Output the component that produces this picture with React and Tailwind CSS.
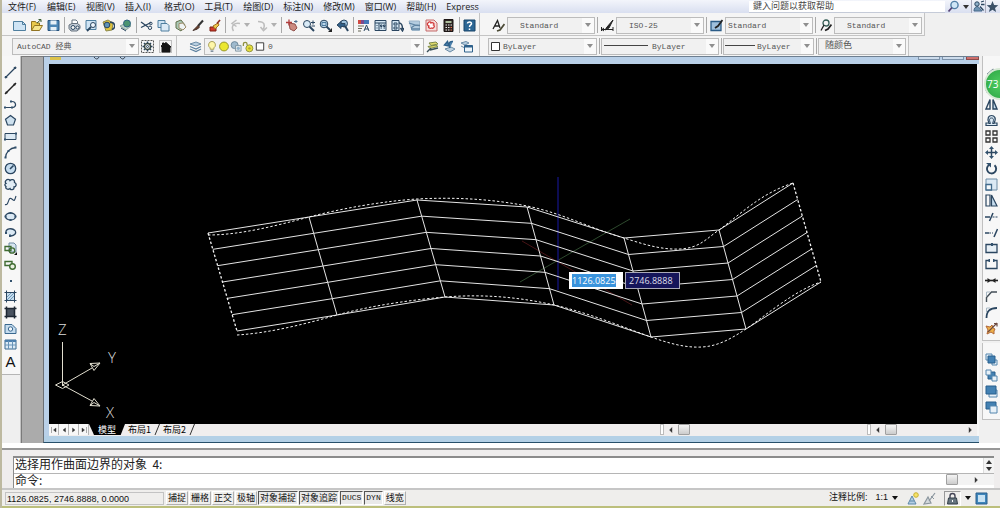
import React from "react";

/* ---------- icon helper ---------- */
const Ic = ({ children, c = "" }) => (
  <svg viewBox="0 0 13 13" className={"block h-[13px] w-[13px] shrink-0 " + c} fill="none" stroke="#2b4660" strokeWidth="1" aria-hidden="true">
    {children}
  </svg>
);
const Down = ({ c = "text-[#8f8f8f]" }) => (
  <svg viewBox="0 0 6 4" className={"block h-1 w-1.5 shrink-0 " + c} aria-hidden="true">
    <path d="M0 0h6L3 4z" fill="currentColor" />
  </svg>
);

const I = {
  fresh: <Ic><path d="M.5 2.5h9l3 3v6H.5z" fill="#cfe4f4" stroke="#4f7f9f" /><path d="M9.5 2.5v3h3" stroke="#4f7f9f" /></Ic>,
  open: <Ic><path d="M1.500 2.500h4l1 1.500h3V11h-8z" fill="#e9c94c" stroke="#927422" /><path d="M1.500 11.500l3-5h8l-3 5z" fill="#f6e58c" stroke="#927422" /><path d="M7 4l4-3.500M8.500.5H11V3" stroke="#3b5d33" /></Ic>,
  save: <Ic><path d="M1 1.500h11v10H1z" fill="#4c86b5" stroke="#285680" /><path d="M3.500 1.500h6v4h-6zM3.500 8h6v3.500h-6z" fill="#e6f0f7" stroke="none" /></Ic>,
  print: <Ic><path d="M4 5V1h4l1.500 1.500V5" fill="#fff" stroke="#66727e" /><path d="M1 6l3-1.500h5.500L12 6.500v3L9 12H3L1 9.500z" fill="#c3ccd6" stroke="#66727e" /><circle cx="5" cy="8.500" r="2" fill="#f5f5f5" /><circle cx="9.500" cy="8.500" r="1.500" fill="#f5f5f5" /></Ic>,
  preview: <Ic><path d="M1 1.500h10v9H1z" fill="#cfe4f4" stroke="#4f7f9f" /><circle cx="8" cy="6" r="2.500" fill="#eef7fd" /><path d="M6 8l-4 4" strokeWidth="1.800" /></Ic>,
  publish: <Ic><path d="M1 3l5-2 5 3-1 7-6 1z" fill="#dfc33c" stroke="#8d8a4c" /><circle cx="5" cy="6" r="2.800" fill="#5f93b8" /><path d="M8 3.500a3.500 3.500 0 0 1 2 7" strokeWidth="1.600" /></Ic>,
  globe: <Ic><path d="M1 7l6-3 5 3-5 4z" fill="#bcd1c8" stroke="#8ba69c" /><circle cx="8" cy="4.500" r="3.500" fill="#4a9470" stroke="#2d6280" /><path d="M2 9l5 3" /></Ic>,
  cut: <Ic><path d="M1 3l7 5M1 8.500l10-5" strokeWidth="1.300" /><circle cx="10" cy="8.800" r="1.700" /><circle cx="10.800" cy="4.500" r="1.300" /></Ic>,
  copy: <Ic><path d="M1 1.500h7v7H1z" fill="#cfe4f4" stroke="#4f7f9f" /><path d="M4 4.500h6l2 2V12H4z" fill="#dbeaf6" stroke="#4f7f9f" /></Ic>,
  paste: <Ic><path d="M2 3l5-2 4 5-4 6-5-3z" fill="#a9c7b4" stroke="#62704a" /><path d="M5 4.500l4-.5 3 4-3 3-4-2z" fill="#eef3f3" stroke="#9c8b68" /></Ic>,
  match: <Ic><path d="M12 1.500L7 7" stroke="#333" strokeWidth="2" /><path d="M7 6.500l-5 5 4.500-1.500 2-2z" fill="#6e4029" stroke="#43302a" /></Ic>,
  block: <Ic><path d="M2 8h6v4H2z" fill="#d23a2b" stroke="#7d2015" /><path d="M5 7l5-3 1 2-4 4z" fill="#f0c84b" stroke="#a07022" /><path d="M12 1L9 4.500" stroke="#8a2c20" strokeWidth="1.600" /></Ic>,
  undo: <Ic><path d="M4.500 12C1.500 7 5 3.500 11 4.500M7.500 1L3 4.500l4.500 3" stroke="#bdbdbd" strokeWidth="1.500" /></Ic>,
  redo: <Ic><path d="M2 2.500c7 0 7 4 5.500 7.500M4.500 8l3 3.500 3.500-3" stroke="#bdbdbd" strokeWidth="1.600" /></Ic>,
  pan: <Ic><path d="M4 4l6 1 2 4-3 3-4-2z" fill="#cb8a80" stroke="#93514c" /><path d="M1 3.500h6M4 .5v6" stroke="#b03c3c" strokeWidth="1.300" /><path d="M9 2.500h3.500M11 1v3" stroke="#4d6f8d" /></Ic>,
  zoomRt: <Ic><circle cx="5" cy="5" r="3.500" fill="#d9eaf6" /><path d="M7.500 7.500L12 12" strokeWidth="2" /><path d="M9 3.500h4M11 1.500v4M9.500 7H13" /></Ic>,
  zoomWin: <Ic><circle cx="5" cy="5" r="3.800" fill="#bcd6ea" /><path d="M3 3.500h4v3H3z" stroke="#4e7ca0" /><path d="M7.500 7.500L11 11" strokeWidth="2" /><path d="M13 13V9l-4 4z" fill="#222" stroke="none" /></Ic>,
  zoomPrev: <Ic><circle cx="8" cy="4.500" r="3.500" fill="#9fc3de" /><path d="M9 7l3 5" strokeWidth="2" /><path d="M1 6l4-3.500v2h4v3H5v2z" fill="#315f88" /></Ic>,
  props: <Ic><path d="M1 1h3v4H1z" fill="#d04a43" stroke="none" /><path d="M4 1h3v4H4z" fill="#7a4a90" stroke="none" /><path d="M7 1h5v4H7z" fill="#4477b8" stroke="none" /><path d="M1 7h6M1 9.500h4M1 12h3" stroke="#665" /><path d="M7 12l2.500-6L12 12M8 10h3.500" /></Ic>,
  center: <Ic><path d="M1 1.500h11v10H1z" fill="#d4e6f2" /><path d="M1 4h11M5 4v7.500M6.500 6h1.500v1.500H6.500zM9.500 6H11v1.500H9.500zM6.500 9H8M9.500 9H11M2.500 6.500h1M2.500 9h1" /></Ic>,
  palette: <Ic><path d="M1 1.500h7v10H1z" fill="#d4e6f2" /><path d="M3 4h3v2H3zM3 8h3v2H3z" /><path d="M8 4c3 0 3.500 2 3.500 6M9.500 9l2 3 1.500-3" strokeWidth="1.400" /></Ic>,
  sheet: <Ic><path d="M1 2h10.500v9.500H4z" fill="#b4cde0" stroke="#9bb4c8" /><path d="M1 4l6 2-4 3M6 6l6 .5M3 10h9" stroke="#5f84a2" strokeWidth="1.300" /></Ic>,
  markup: <Ic><path d="M1 1h8l3 3v8H1z" fill="#f6dcda" stroke="#c46a6a" /><path d="M3 4c1-2 3-1 3 0 2-1 4 1 2.500 2 2 1 0 4-2 3-2 1-4-1-2.500-2C2 6 2 4.500 3 4z" fill="#fff" stroke="#d23b3b" strokeWidth="1.300" /></Ic>,
  calc: <Ic><path d="M2 .5h9v12H2z" fill="#2d2422" stroke="#1d1615" /><path d="M3.500 2h6v2h-6z" fill="#aebf9e" stroke="none" /><path d="M3.500 6h1.500M6 6h1.500M8.500 6H10M3.500 8.500h1.500M6 8.500h1.500M3.500 11h1.500M6 11h1.500" stroke="#eee" /><path d="M8.500 8.500H10M8.500 11H10" stroke="#e86a4a" /></Ic>,
  help: <Ic><path d="M1 1h11v11H1z" fill="#2c6795" stroke="#184468" /><path d="M4.500 4.500C4.500 2.500 8.500 2.500 8.500 4.800 8.500 6 6.500 6 6.500 8M6.500 9.500v1.500" stroke="#fff" strokeWidth="1.500" /></Ic>,
  gear: <Ic><path d="M.5.500h12v12H.5z" stroke="#555" strokeDasharray="2 1" /><circle cx="6.500" cy="6.500" r="3" stroke="#3c4a44" strokeWidth="1.500" /><circle cx="6.500" cy="6.500" r="1" /><path d="M6.500 1.500V3M6.500 10v1.500M1.500 6.500H3M10 6.500h1.500M3 3l1 1M9 9l1 1M10 3L9 4M4 9l-1 1" strokeWidth="1.500" /></Ic>,
  home: <Ic><path d="M.5.500h12v12H.5z" stroke="#888" strokeDasharray="1 1" /><path d="M2 6l1.500-1V3H5v1l2-1.500L12 7h-1v5H3V7z" fill="#151515" stroke="#151515" /></Ic>,
  layers: <Ic><path d="M1 4l6-2 5 2-5 2z" fill="#b9d0e2" stroke="#6c8ca6" /><path d="M1 6.500l6 2.500 5-2.500M1 9l6 2.500L12 9" stroke="#5d82a0" strokeWidth="1.300" /></Ic>,
  bulb: <Ic><path d="M6.500 1a3.800 3.800 0 0 1 2 7v1.500h-4V8a3.800 3.800 0 0 1 2-7z" fill="#fff7a8" stroke="#a59c52" /><path d="M5 11.500h3" /></Ic>,
  sun: <Ic><circle cx="6.500" cy="6.500" r="4.800" fill="#ebe72f" stroke="#8f8f28" /></Ic>,
  freeze: <Ic><circle cx="5" cy="5" r="3.800" fill="#9fbace" stroke="#6b8799" /><path d="M6 5.500h6v6H6z" fill="#dde7ec" stroke="#8196a3" /><circle cx="9" cy="8.500" r="1.700" fill="#8eb0c9" stroke="none" /></Ic>,
  lock: <Ic><path d="M1.500 6V4a2 2 0 0 1 4 0v1" stroke="#8f9140" strokeWidth="1.400" /><circle cx="8" cy="8.500" r="3.800" fill="#e6df3b" stroke="#8f9140" /><circle cx="8" cy="8.500" r="1.300" fill="#b0a92a" stroke="none" /></Ic>,
  swatch: <Ic><path d="M2.500 2.500h8v8h-8z" fill="#fff" stroke="#333" /></Ic>,
  layA: <Ic><path d="M3 3l7-1 2 2-7 1.500zM2 6.500L10 5l2 1.500-8 2z" fill="#ded86c" stroke="#7d8a49" /><path d="M4 10l8-2M1 12l4-4" stroke="#394f58" strokeWidth="1.400" /></Ic>,
  layB: <Ic><path d="M2 9l6-2 4 2-5 3z" fill="#bcd0df" stroke="#6c8ca6" /><path d="M10 1.500C6 1 5 4 7 8M1.500 5l3-3.500L6 6z" fill="#4d82ad" stroke="#2f618b" strokeWidth="1.400" /></Ic>,
  layC: <Ic><path d="M1 3l5-1.500L9 3 5 5zM1 6l3 1.500" fill="#b9d0e2" stroke="#6c8ca6" /><path d="M4.500 5.500h8V12h-8z" fill="#eef5fa" stroke="#2f618b" /><path d="M4.500 6.500h8" stroke="#2f618b" strokeWidth="2" /></Ic>,
  textA: <Ic><path d="M1 10L5.500 1.500 8 9M3 7h4" stroke="#222" strokeWidth="1.300" /><path d="M12.500 5L8 11l-3 1" stroke="#4b4a35" strokeWidth="1.800" /></Ic>,
  dim: <Ic><path d="M.5 10.500H12M.5 8v4M12 8v4M3 9l-2 1.500L3 12" stroke="#222" /><path d="M12 1L6 8l-2 3 4-2z" fill="#222" stroke="#222" /></Ic>,
  tbl: <Ic><path d="M1 2.500h10v9H1z" fill="#9fc0dc" stroke="#2b5c87" strokeWidth="1.300" /><path d="M12.500 1L8 7l-3 2" stroke="#222" strokeWidth="1.800" /></Ic>,
  leader: <Ic><circle cx="7" cy="4" r="3" stroke="#315a52" strokeWidth="1.300" /><path d="M5 6L2 11.500" stroke="#222" strokeWidth="1.300" /><path d="M12.500 5.500L9 10l-3 1.500" stroke="#222" strokeWidth="1.800" /></Ic>,
  search: <Ic><circle cx="7.500" cy="5" r="3.600" fill="#d0e6f6" stroke="#527fa5" strokeWidth="1.400" /><path d="M5 7.500L1.500 11.500" strokeWidth="1.800" stroke="#547" /></Ic>,
  comm: <Ic><path d="M2 11c0-3 1.500-4.500 4-4.500L10 11z" fill="#6e93b2" stroke="#47698a" /><circle cx="5" cy="4" r="2.200" fill="#8fb0c9" /><path d="M9 2l3-1M9 4.500h3.500M8 6.500l3.500 4" strokeWidth="1.300" /></Ic>,
  star: <Ic><path d="M6.500 1l1.600 3.900 4.200.3L9 7.900l1.100 4.100-3.600-2.300L2.900 12 4 7.900.7 5.200l4.200-.3z" fill="#3a5068" stroke="none" /></Ic>,
};

const P = "#33526e";
const drawTools = [
  ["直线", <Ic><path d="M2 11L11 2" strokeWidth="1.300" /><path d="M1 12l.5-2L3 11.500zM12 1l-.5 2L10 1.500z" fill={P} /></Ic>],
  ["构造线", <Ic><path d="M1 12L12 1" strokeWidth="1.500" stroke="#222" /><path d="M1 12l1-3 2 2zM12 1L9 2l2 2z" fill="#222" stroke="none" /></Ic>],
  ["多段线", <Ic><path d="M1 9.500h8c4-1 3-6-1-6" strokeWidth="1.200" /><path d="M0 8.500h2v2H0zM7 8.500h2v2H7zM6 2.500h2v2H6z" fill={P} stroke="none" /></Ic>],
  ["正多边形", <Ic><path d="M6.500 1.500l5 3.800-2 5.700h-6l-2-5.700z" fill="#cde0ee" strokeWidth="1.200" /></Ic>],
  ["矩形", <Ic><path d="M1 3.500h11v6H1z" fill="#dce9f3" /><path d="M0 8.500h2v2H0zM11 2.500h2v2h-2z" fill={P} stroke="none" /></Ic>],
  ["圆弧", <Ic><path d="M1.500 11.500C2 6 6 2 11.500 1.500" strokeWidth="1.300" /><path d="M0.500 10.500h2v2h-2zM10.500.5h2v2h-2zM3.500 4h2v2h-2z" fill={P} stroke="none" /></Ic>],
  ["圆", <Ic><circle cx="6.500" cy="6.500" r="5.200" fill="#c5dcee" strokeWidth="1.300" /><path d="M6 7l3.500-3.500" strokeWidth="1.600" /></Ic>],
  ["修订云线", <Ic><path d="M2 2.500C3 1 5.500 1 6 2.500 7.500.8 11 1.500 10.500 4.500c2.500 1 2 4.500-.5 4.500.5 3-3.500 3.500-4 1.500-2 1.500-5 .5-4-2C.5 7.500.5 6 2 5.500 1 4.500 1 3.500 2 2.500z" fill="#e1ecf4" strokeWidth="1.300" /></Ic>],
  ["样条曲线", <Ic><path d="M1 10.500C5 12 4 3 7 4.500S10 9 12 2" strokeWidth="1.100" /></Ic>],
  ["椭圆", <Ic><ellipse cx="6.500" cy="6.500" rx="5" ry="3.500" fill="#dbe9f4" strokeWidth="1.300" /><path d="M.5 5.500h2v2h-2zM10.500 5.500h2v2h-2zM5.500 2h2v2h-2zM5.500 9h2v2h-2z" fill={P} stroke="none" /></Ic>],
  ["椭圆弧", <Ic><path d="M2 7C1 2.500 8 1.500 11 4.500c2 3-1 5-4 5.500" fill="#dbe9f4" strokeWidth="1.300" /><path d="M5 8.500h2v2.500H5zM1 6h2v2H1z" fill={P} stroke="none" /></Ic>],
  ["插入块", <Ic><path d="M5 1h5l2 2v7H5z" fill="#d7e5ef" stroke="#6e8ba3" /><path d="M1 4.500h6v4H1z" stroke="#3f6b31" strokeWidth="1.300" /><circle cx="8" cy="8.500" r="2.700" stroke="#3f6b31" strokeWidth="1.300" /><path d="M13 13v-3l-3 3z" fill="#111" stroke="none" /></Ic>],
  ["创建块", <Ic><path d="M1 3.500h7v4H1z" stroke="#3f6b31" strokeWidth="1.400" /><circle cx="8.500" cy="8.500" r="2.800" fill="#e9f0e0" stroke="#3f6b31" strokeWidth="1.400" /></Ic>],
  ["点", <Ic><path d="M6 6h2v2H6z" fill={P} stroke="none" /></Ic>],
  ["图案填充", <Ic><path d="M2.500 2.500h8v8h-8z" fill="#c5dcec" /><path d="M3 7l4-4M3 10l7-7M6 10l4-4" stroke="#6f9abd" /><path d="M.5 2.500h12M.5 10.500h12M2.500.5v12M10.500.5v12" /></Ic>],
  ["渐变色", <Ic><path d="M2.500 2.500h8v8h-8z" fill="#48525f" /><path d="M.5 2.500h12M.5 10.500h12M2.500.5v12M10.500.5v12" stroke="#1d2733" strokeWidth="1.500" /></Ic>],
  ["面域", <Ic><path d="M1 2.500h7l4 4v5H1z" fill="#c5dcee" stroke="#39688f" /><circle cx="6.500" cy="7" r="2.200" fill="#f2f7fb" stroke="#39688f" /></Ic>],
  ["表格", <Ic><path d="M1 2h11v9H1z" fill="#dcebf6" stroke="#39688f" /><path d="M1 3h11" stroke="#4a7fae" strokeWidth="2" /><path d="M4.500 3v8M8.500 3v8M1 7h11" stroke="#6994b8" /></Ic>],
];

const modifyTools = [
  ["删除", <Ic><path d="M2 8l6-5 3 2-6 5z" fill="#e8eef2" stroke="#7a8b98" /></Ic>],
  ["复制", <Ic><circle cx="4" cy="8" r="3" /><circle cx="9" cy="7" r="3" /></Ic>],
  ["镜像", <Ic><path d="M5 1.500V11H1z" strokeWidth="1.400" /><path d="M8 1.500V11h4z" fill="#c5dcee" strokeWidth="1.400" /></Ic>],
  ["偏移", <Ic><path d="M1 11.500h11V9H9C12 4 9 1.500 6.500 1.500S1.500 4 4 9H1z" fill="#dbe9f4" strokeWidth="1.200" /><path d="M3.500 9.500h2C3.500 5 5 4 6.500 4S9.500 5 7.500 9.500h2" /></Ic>],
  ["阵列", <Ic><path d="M1 1h4v4H1zM8 1h4v4H8zM1 8h4v4H1zM8 8h4v4H8z" strokeWidth="1.300" stroke="#333" /></Ic>],
  ["移动", <Ic><path d="M6.500 2v9M2 6.500h9" strokeWidth="1.500" /><path d="M6.500 0l2.500 3H4zM6.500 13L4 10h5zM0 6.500L3 4v5zM13 6.500L10 9V4z" fill={P} stroke="none" /></Ic>],
  ["旋转", <Ic><path d="M4 3a4.600 4.600 0 1 0 5.500.3" strokeWidth="1.900" /><path d="M1 1h5v4.500z" fill={P} stroke="none" /></Ic>],
  ["缩放", <Ic><path d="M1 1h11v11H1z" fill="#dbe9f4" stroke="#6f8da6" /><path d="M1 6.500h5.500V12H1z" fill="#f4f8fb" stroke="#426b8c" strokeWidth="1.300" /></Ic>],
  ["拉伸", <Ic><path d="M1 1h4v11H1z" strokeWidth="1.200" /><path d="M6.500 1L12 12H6.500z" fill="#c5dcee" strokeWidth="1.200" /></Ic>],
  ["修剪", <Ic><path d="M0 7h5M8 3L4.500 11" strokeWidth="1.500" /><path d="M7.500 7H13" strokeDasharray="2 1" /></Ic>],
  ["延伸", <Ic><path d="M0 7h4.500" strokeWidth="1.500" /><path d="M5 7h4" strokeDasharray="1 1" /><path d="M12.500 3L9 11" strokeWidth="1.500" /></Ic>],
  ["打断于点", <Ic><path d="M1 2.500h11v8H1z" fill="#e7eff5" strokeWidth="1.300" /><path d="M6 1h2v3H6z" fill={P} stroke="none" /></Ic>],
  ["打断", <Ic><path d="M4 2.500H1v8h11v-8H9" strokeWidth="1.300" /><path d="M3.500 1h1.500v3H3.500zM8 1h1.500v3H8z" fill={P} stroke="none" /></Ic>],
  ["合并", <Ic><path d="M0 6.500h13" stroke="#222" strokeWidth="1.600" /><path d="M6 6.500L2.500 4v5zM7 6.500L10.500 4v5z" fill="#222" stroke="none" /></Ic>],
  ["倒角", <Ic><path d="M1.500 12V7.500L6.500 2H12" strokeWidth="1.400" stroke="#444f58" /><path d="M1.500 6V2H5" stroke="#a8b8c4" /></Ic>],
  ["圆角", <Ic><path d="M1.500 12C1.500 5 5 2 12 2" strokeWidth="1.800" /><path d="M1.500 6V2H5" stroke="#a8b8c4" /></Ic>],
  ["分解", <Ic><path d="M1 4l4 1 2-2 1 3 2 1-1 2 0 3-3-2-4 2 1-4z" fill="#eeb14a" stroke="#b0683a" /><path d="M12 1L3 10M9 1.500h3v3" stroke="#6c4a41" strokeWidth="1.200" /></Ic>],
];
const orderTools = [
  ["前置", <Ic><path d="M1 1h6v6H1zM7 7h5v5H7z" fill="#e8f1f8" stroke="#5486ae" /><path d="M3 3h7v7H3z" fill="#4381b3" stroke="#295f8c" /></Ic>],
  ["后置", <Ic><path d="M3 3h7v7H3z" fill="#4381b3" stroke="#295f8c" /><path d="M1 1h5v5H1zM7 7h5v5H7z" fill="#e8f1f8" stroke="#5486ae" /></Ic>],
  ["置于对象之上", <Ic><path d="M4 5h8v7H4z" fill="#e8f1f8" stroke="#5486ae" /><path d="M1 1h10v8H1z" fill="#4381b3" stroke="#295f8c" /></Ic>],
  ["置于对象之下", <Ic><path d="M1 1h10v7H1z" fill="#4381b3" stroke="#295f8c" /><path d="M5 5h7v7H5z" fill="#e8f1f8" stroke="#5486ae" /></Ic>],
];

/* ---------- controls ---------- */
const Tool = ({ label, children }) => (
  <button type="button" aria-label={label} className="flex h-4 w-[17px] shrink-0 items-center justify-center">
    {children}
  </button>
);
const Sep = () => (
  <span className="flex h-4 w-1 shrink-0 justify-center">
    <span className="w-px bg-[#a9a9a9]" />
  </span>
);
const Combo = ({ label, value, w, pad = "pl-3", before, arrow = "w-3" }) => (
  <div className={"flex h-[17px] shrink-0 items-center border border-[#bcbcbc] bg-[#f1f1f1] " + w}>
    {before}
    <select aria-label={label} className={"h-[15px] min-w-0 flex-1 appearance-none bg-transparent font-['Liberation_Mono','Noto_Sans_CJK_SC',monospace] text-[8px] leading-[15px] text-[#555] outline-none " + pad}>
      <option>{value}</option>
    </select>
    <span className={"flex h-full shrink-0 items-center justify-center bg-[#fafafa] " + arrow}>
      <Down />
    </span>
  </div>
);
const Rule = () => (
  <svg viewBox="0 0 44 2" className="ml-0.5 block h-0.5 w-11 shrink-0" aria-hidden="true">
    <path d="M0 .5h44" stroke="#444" />
  </svg>
);

const menus = ["文件(F)", "编辑(E)", "视图(V)", "插入(I)", "格式(O)", "工具(T)", "绘图(D)", "标注(N)", "修改(M)", "窗口(W)", "帮助(H)", "Express"];

function MenuBar() {
  return (
    <header className="flex h-[13px] items-center bg-linear-to-b from-[#f3f5fb] to-[#d9dff0]">
      <nav className="flex gap-2.5 pl-1.5 font-['Open_Sans','Noto_Sans_CJK_SC',sans-serif] text-[9px] leading-[13px] text-[#1a1a1a]">
        {menus.map((m) => (
          <button type="button" key={m} className="min-w-[29px] whitespace-nowrap text-left">{m}</button>
        ))}
      </nav>
      <div className="ml-auto flex h-[13px] items-center">
        <input aria-label="帮助搜索" placeholder="鍵入问题以获取帮助" className="h-3 w-[196px] border-b border-[#c5cbd8] bg-white px-1 font-['Noto_Sans_CJK_SC',sans-serif] text-[9px] leading-3 placeholder:text-[#444] placeholder:opacity-100" />
        <button type="button" aria-label="搜索" className="flex items-center gap-[3px] px-0.5">{I.search}<Down c="text-[#333]" /></button>
        <button type="button" aria-label="通讯中心" className="border-l border-[#aab]">{I.comm}</button>
        <button type="button" aria-label="收藏夹" className="border-l border-[#aab] pr-px">{I.star}</button>
      </div>
    </header>
  );
}

function StandardBar() {
  return (
    <div className="flex">
      <div className="flex h-[23px] items-center border-r border-b border-[#c4c4c4] bg-[#f5f5f5] pt-0.5 pr-px pl-[9px]">
        <Tool label="新建">{I.fresh}</Tool><Tool label="打开">{I.open}</Tool><Tool label="保存">{I.save}</Tool><Sep />
        <Tool label="打印">{I.print}</Tool><Tool label="打印预览">{I.preview}</Tool><Tool label="发布">{I.publish}</Tool><Tool label="三维DWF">{I.globe}</Tool><Sep />
        <Tool label="剪切">{I.cut}</Tool><Tool label="复制到剪贴板">{I.copy}</Tool><Tool label="粘贴">{I.paste}</Tool><Tool label="特性匹配">{I.match}</Tool><Tool label="块编辑器">{I.block}</Tool><Sep />
        <Tool label="放弃">{I.undo}</Tool>
        <button type="button" aria-label="放弃列表" className="flex w-2.5 items-center"><Down c="text-[#b0b0b0]" /></button>
        <Tool label="重做">{I.redo}</Tool>
        <button type="button" aria-label="重做列表" className="flex w-2 items-center"><Down c="text-[#b0b0b0]" /></button><Sep />
        <Tool label="平移">{I.pan}</Tool><Tool label="实时缩放">{I.zoomRt}</Tool><Tool label="窗口缩放">{I.zoomWin}</Tool><Tool label="缩放上一个">{I.zoomPrev}</Tool><Sep />
        <Tool label="特性">{I.props}</Tool><Tool label="设计中心">{I.center}</Tool><Tool label="工具选项板">{I.palette}</Tool><Tool label="图纸集">{I.sheet}</Tool><Tool label="标记集">{I.markup}</Tool><Tool label="计算器">{I.calc}</Tool><Sep />
        <Tool label="帮助">{I.help}</Tool>
      </div>
      <div className="flex h-[23px] items-center border-r border-b border-[#c4c4c4] bg-[#f5f5f5] pt-0.5 pr-0.5 pl-2.5">
        <Tool label="文字样式">{I.textA}</Tool><Combo label="文字样式" value="Standard" w="w-[88px]" />
        <Sep /><Tool label="标注样式">{I.dim}</Tool><Combo label="标注样式" value="ISO-25" w="w-[88px]" />
        <Sep /><Tool label="表格样式">{I.tbl}</Tool><Combo label="表格样式" value="Standard" w="w-[88px]" pad="pl-0.5" />
        <Sep /><Tool label="多重引线">{I.leader}</Tool><Combo label="多重引线样式" value="Standard" w="w-[88px]" />
      </div>
    </div>
  );
}

function LayerBar() {
  return (
    <div className="flex">
      <div className="flex h-5 items-center border-r border-[#c4c4c4] bg-[#f5f5f5] pr-0.5 pl-2.5">
        <Combo label="工作空间" value="AutoCAD 经典" w="w-[127px]" pad="pl-1" />
        <span className="flex w-[35px] justify-around"><Tool label="工作空间设置">{I.gear}</Tool><Tool label="我的工作空间">{I.home}</Tool></span>
      </div>
      <div className="flex h-5 items-center border-r border-[#c4c4c4] bg-[#f5f5f5] pr-1 pl-2.5">
        <Tool label="图层特性">{I.layers}</Tool>
        <Combo label="图层" value="0" w="w-[220px]" pad="pl-0.5" before={<span className="flex pl-px [&_svg]:w-3">{I.bulb}{I.sun}{I.freeze}{I.lock}{I.swatch}</span>} />
        <Tool label="置为当前">{I.layA}</Tool><Tool label="上一个图层">{I.layB}</Tool><Tool label="图层状态">{I.layC}</Tool>
      </div>
      <div className="flex h-5 items-center border-r border-[#c4c4c4] bg-[#f5f5f5] pr-0.5 pl-2">
        <Combo label="颜色" value="ByLayer" w="w-[109px]" pad="pl-px" before={I.swatch} />
        <Sep /><Combo label="线型" value="ByLayer" w="w-[118px]" pad="pl-1" before={<Rule />} />
        <Sep /><Combo label="线宽" value="ByLayer" w="w-[91px]" pad="pl-0.5" before={<svg viewBox="0 0 30 2" className="ml-px block h-0.5 w-[30px] shrink-0" aria-hidden="true"><path d="M0 .5h30" stroke="#444" /></svg>} />
        <Sep /><Combo label="打印样式" value="随颜色" w="w-[88px]" pad="pl-1.5 text-[9px]" />
      </div>
    </div>
  );
}

/* ---------- model space drawing ---------- */
const top = [[208, 233], [309, 217], [417, 200], [527, 207], [624, 238], [719, 230], [793, 183]];
const bottom = [[237, 331], [337, 315], [445, 297], [554, 305], [651, 337], [746, 329], [821, 282]];
const meshRow = (k) => top.map(([x, y], i) => `${x + ((bottom[i][0] - x) * k) / 6},${y + ((bottom[i][1] - y) * k) / 6}`).join(" ");

function Drawing() {
  return (
    <svg className="block h-full w-full" role="img" aria-label="曲面网格">
      <g transform="translate(-49 -64)" fill="none">
        <path d="M520 282L630 219" stroke="#2e4a2e" />
        <path d="M522 241L632 305" stroke="#481416" />
        <path d="M558 177V290" stroke="#10106e" strokeWidth="1.500" />
        <g stroke="#e4e4e4">
          {[0, 1, 2, 3, 4, 5, 6].map((k) => <polyline key={k} points={meshRow(k)} />)}
          {[1, 2, 3, 4, 5].map((i) => <path key={i} d={`M${top[i]}L${bottom[i]}`} />)}
        </g>
        <g stroke="#f4f4f4" strokeDasharray="2.500 2">
          <path d="M208 233L237 331" strokeWidth="1.300" />
          <path d="M793 183L821 282" strokeWidth="1.300" />
          <path d="M208 235C240 235 275 226 309 217S385 201 417 199C455 197 492 199 527 206S592 229 624 238C640 243 660 250 680 249S707 238 719 230C742 213 760 194 793 183" />
          <path d="M237 335C270 333 305 324 337 315S410 300 445 297C483 294 519 297 554 305S620 326 651 337C668 343 685 348 702 347S732 338 746 329C765 316 795 290 821 282" />
        </g>
        <g stroke="#e2dfd0">
          <path d="M62.500 342V386M62.500 385L92 368M62.500 385L92 401" />
          <path d="M55.500 385l7-3.500 6.500 3.500-6.500 3.500z" />
          <path d="M100 363l-10 .5 4 7zM90 363.500l4 3 6-3.500M100 406l-10-.5 4-7zM90 405.500l4-3 6 3.500" />
        </g>
        <g fill="#dddddd" className="font-['Open_Sans',sans-serif] text-[15px] font-light">
          <text x="58" y="335">Z</text>
          <text x="108" y="363">Y</text>
          <text x="106" y="418">X</text>
        </g>
      </g>
    </svg>
  );
}

const Arrow = ({ d, label, c = "" }) => (
  <button type="button" aria-label={label} className={"flex h-[11px] shrink-0 items-center justify-center " + c}>
    <svg viewBox="0 0 8 8" className="block h-2 w-2" aria-hidden="true"><path d={d} fill="#333" stroke="#333" strokeWidth=".4" /></svg>
  </button>
);
const Thumb = () => <span className="h-[11px] w-3 shrink-0 rounded-[1px] border border-[#a0a0a0] bg-linear-to-b from-[#f4f4f4] to-[#cccccc]" />;
const Slash = () => (
  <svg viewBox="0 0 6 11" className="block h-[11px] w-1.5 shrink-0" aria-hidden="true"><path d="M1 11L5.500 0" stroke="#333" /></svg>
);

function TabRow() {
  const nav = "w-[10px] border-r border-[#b5b5b5] bg-[#f7f7f7]";
  return (
    <div className="flex h-3 shrink-0 items-start bg-[#f0eeee]">
      <div className="flex items-center font-['Noto_Sans_CJK_SC',sans-serif] text-[9px] leading-[11px]">
        <Arrow label="第一个" c={nav} d="M1.500 1v6M6 2L3.500 4 6 6z" />
        <Arrow label="上一个" c={nav} d="M5.500 2L3 4l2.500 2z" />
        <Arrow label="下一个" c={nav} d="M2.500 2L5 4 2.500 6z" />
        <Arrow label="最后一个" c={nav} d="M6.500 1v6M2 2l2.500 2L2 6z" />
        <button type="button" className="h-[11px] w-9 bg-black text-center text-white [clip-path:polygon(0_0,100%_0,88%_100%,14%_100%)]">模型</button>
        <button type="button" className="px-[3px]">布局1</button>
        <Slash />
        <button type="button" className="px-[3px]">布局2</button>
        <Slash />
      </div>
      <div className="ml-auto flex w-[317px] shrink-0">
        <div className="flex w-[207px] items-center">
          <span className="h-[11px] w-1 border border-[#bbb] bg-white" />
          <Arrow label="向左" c="w-3.5" d="M5 1.500L2.500 4 5 6.500z" /><Thumb />
        </div>
        <div className="flex flex-1 items-center">
          <span className="h-[11px] w-1 border border-[#bbb] bg-white" />
          <Arrow label="向左滚动" c="w-3.5" d="M5 1.500L2.500 4 5 6.500z" /><Thumb />
          <Arrow label="向右滚动" c="ml-auto w-3.5" d="M3 1.500L5.500 4 3 6.500z" />
        </div>
      </div>
    </div>
  );
}

function DrawingWindow() {
  return (
    <section className="flex min-w-0 flex-1 flex-col border-t border-b border-l border-t-[#6e7f90] border-b-[#27506b] border-l-[#6a6f75]">
      <div className="flex h-[7px] shrink-0 items-start bg-[#b9d0e8]">
        <svg viewBox="0 0 90 5" className="ml-1.5 block h-[5px] w-[90px]" aria-hidden="true">
          <path d="M0 0h11v3H0z" fill="#dcc24a" />
          <path d="M44 0q3 4 5 0M70 0q3 4 5 0" stroke="#3a4653" fill="none" />
        </svg>
        <div className="ml-auto flex gap-0.5">
          <button type="button" aria-label="最小化" className="h-[3px] w-[22px] border border-t-0 border-[#7d93ab] bg-[#cddcec]" />
          <button type="button" aria-label="还原" className="h-[3px] w-[22px] border border-t-0 border-[#7d93ab] bg-[#cddcec]" />
          <button type="button" aria-label="关闭" className="h-[3px] w-[13px] border border-t-0 border-[#8d4a4a] bg-[#cf6f6c]" />
        </div>
      </div>
      <div className="flex min-h-0 flex-1 border-l-[5px] border-[#b9d0e8]">
        <div className="flex min-w-0 flex-1 flex-col">
          <div className="relative min-h-[360px] flex-1 overflow-hidden bg-black">
            <div className="absolute inset-0"><Drawing /></div>
            <div className="absolute top-[208px] left-[520px] flex gap-0.5 font-['Open_Sans',sans-serif] text-[9px]">
              <div className="h-[17px] w-[54px] bg-white py-0.5 pl-[3px]">
                <input aria-label="X 坐标" defaultValue="1126.0825" className="block h-[13px] w-11 bg-[#3a93dc] leading-[13px] text-white outline-none" />
              </div>
              <input aria-label="Y 坐标" defaultValue="2746.8888" className="block h-[17px] w-[55px] border border-[#a9a9b8] bg-[#15155a] px-[3px] leading-[13px] text-[#dedee8] outline-none" />
            </div>
          </div>
          <TabRow />
        </div>
        <div className="w-0.5 shrink-0 bg-[#f6f6f6]" />
      </div>
      <div className="h-[6px] shrink-0 bg-[#b3d0e6]" />
    </section>
  );
}

const SideTool = ({ label, children }) => (
  <button type="button" aria-label={label} className="flex h-4 w-[17px] items-center justify-center">{children}</button>
);

function Workspace() {
  return (
    <main className="flex min-h-0 flex-1">
      <aside className="w-[19px] shrink-0 border-r border-[#c4c4c4] bg-[#efefef]">
        <div className="border-b border-[#b5b5b5] bg-[#f7f7f7] pt-2 pb-0.5">
          {drawTools.map(([n, ic]) => <SideTool key={n} label={n}>{ic}</SideTool>)}
          <button type="button" aria-label="多行文字" className="flex h-5 w-[17px] items-center justify-center font-['Liberation_Sans',sans-serif] text-[15px] leading-4 text-[#111]">A</button>
        </div>
      </aside>
      <div className="w-[22px] shrink-0 border-t border-l border-[#7a7a7a] bg-[#ababab]" />
      <DrawingWindow />
      <aside className="relative flex w-[21px] shrink-0 flex-col items-end bg-[#f0f0f0]">
        <div className="border-b border-l border-[#c0c0c0] bg-[#f7f7f7] pt-2 pb-1">
          {modifyTools.map(([n, ic]) => <SideTool key={n} label={n}>{ic}</SideTool>)}
        </div>
        <div className="mt-0.5 border-b border-l border-[#c0c0c0] bg-[#f7f7f7] pt-2 pb-1">
          {orderTools.map(([n, ic]) => <SideTool key={n} label={n}>{ic}</SideTool>)}
        </div>
        <div className="absolute top-3 left-[5px] h-8 w-4 overflow-hidden">
          <div className="flex h-8 w-8 items-center rounded-full border-2 border-[#d6e8d4] bg-radial from-[#4fcf62] to-[#2aa343] pl-px font-['Open_Sans',sans-serif] text-[10px] text-white">73</div>
        </div>
      </aside>
    </main>
  );
}

function CommandPanel() {
  return (
    <section className="shrink-0 border-t-[5px] border-white">
      <div className="border-t-2 border-[#979797] bg-[#efeded] pt-[6px] pr-1.5 pl-[11px]">
        <div className="border-t-2 border-l border-[#8b8b8b] bg-white font-['Noto_Sans_CJK_SC',sans-serif] text-[12px] leading-3 text-[#222]">
          <div className="flex h-4 border-b border-[#b5b5b5]">
            <output className="flex-1 pl-px leading-3">选择用作曲面边界的对象&nbsp; 4:</output>
            <div className="flex w-[11px] flex-col justify-around border-l border-[#ddd] bg-[#f4f4f4]">
              <button type="button" aria-label="向上" className="flex justify-center"><Down c="rotate-180 text-[#333]" /></button>
              <button type="button" aria-label="向下" className="flex justify-center"><Down c="text-[#333]" /></button>
            </div>
          </div>
          <div className="flex h-[14px] items-start">
            <label htmlFor="cmd" className="pl-px leading-3">命令:</label>
            <input id="cmd" className="h-[13px] min-w-0 flex-1 pl-1 outline-none" />
            <div className="flex w-[48px] items-center bg-[#f3f3f3]">
              <Thumb />
              <Arrow label="命令行右移" c="ml-3 w-3" d="M3 1.500L5.500 4 3 6.500z" />
            </div>
          </div>
        </div>
      </div>
    </section>
  );
}

const toggles = [["捕捉", 0], ["栅格", 0], ["正交", 0], ["极轴", 0], ["对象捕捉", 1], ["对象追踪", 1], ["DUCS", 2], ["DYN", 2], ["线宽", 0]];
const toggleLook = [
  "border-t-white border-r-[#b0b0b0] border-b-[#b0b0b0] border-l-white",
  "border-t-[#555] border-r-white border-b-white border-l-[#555] bg-[#e9e9e9]",
  "border-t-[#555] border-r-white border-b-white border-l-[#555] bg-[#e9e9e9] font-['Liberation_Mono',monospace] text-[8px]",
];

function StatusBar() {
  return (
    <footer className="flex h-[20px] shrink-0 items-center border-t-2 border-b-2 border-t-[#c6c6c6] border-b-[#bcbf7c] bg-[#efeeec] pr-3 pl-[3px] font-['Liberation_Sans','Noto_Sans_CJK_SC',sans-serif] text-[9px] text-[#111]">
      <output className="h-[13px] w-[159px] border border-[#c3c3c3] pl-px leading-3">1126.0825, 2746.8888, 0.0000</output>
      <div className="flex gap-px pl-0.5">
        {toggles.map(([t, look]) => (
          <button type="button" key={t} aria-pressed={look > 0} className={"h-[14px] border px-px leading-3 whitespace-nowrap " + toggleLook[look]}>{t}</button>
        ))}
      </div>
      <div className="ml-auto flex items-center">
        <span className="pr-2">注释比例:</span>
        <button type="button" aria-label="注释比例" className="flex items-center gap-1 pr-2">1:1<Down c="text-[#111]" /></button>
        <button type="button" aria-label="注释可见性" className="pr-1"><Ic><path d="M2 12l4-8 4 8zM4 9h4" fill="#b4cfe4" stroke="#5b87a8" /><circle cx="10" cy="3" r="2.300" fill="#f4e36a" stroke="#c9b033" /></Ic></button>
        <button type="button" aria-label="自动添加比例" className="pr-2"><Ic><path d="M1 12l4-7 3 6zM12 1L6 9" fill="#d5dade" stroke="#8b969e" strokeWidth="1.200" /><path d="M8 4l3 3" stroke="#8b969e" /></Ic></button>
        <button type="button" aria-label="锁定" className="border border-t-[#999] border-r-white border-b-white border-l-[#999] px-px"><Ic><path d="M4 6V4a2.500 2.500 0 0 1 5 0v2" stroke="#445" strokeWidth="1.400" /><path d="M2.500 6h8l1 6h-10z" fill="#66757f" stroke="#333f48" /><path d="M6.500 8v2" stroke="#fff" /></Ic></button>
        <button type="button" aria-label="状态栏菜单" className="px-1"><Down c="text-[#111]" /></button>
        <button type="button" aria-label="全屏显示"><Ic><path d="M1 1h11v11H1z" fill="#3f86bb" stroke="#2a5f8c" /><path d="M3 3h7v7H3z" fill="#c8e2f3" stroke="none" /></Ic></button>
      </div>
    </footer>
  );
}

export default function App() {
  return (
    <div className="flex min-h-screen flex-col overflow-hidden border-l-2 border-[#bdb9a0] bg-[#f0f0f0]">
      <MenuBar />
      <StandardBar />
      <LayerBar />
      <Workspace />
      <CommandPanel />
      <StatusBar />
    </div>
  );
}
